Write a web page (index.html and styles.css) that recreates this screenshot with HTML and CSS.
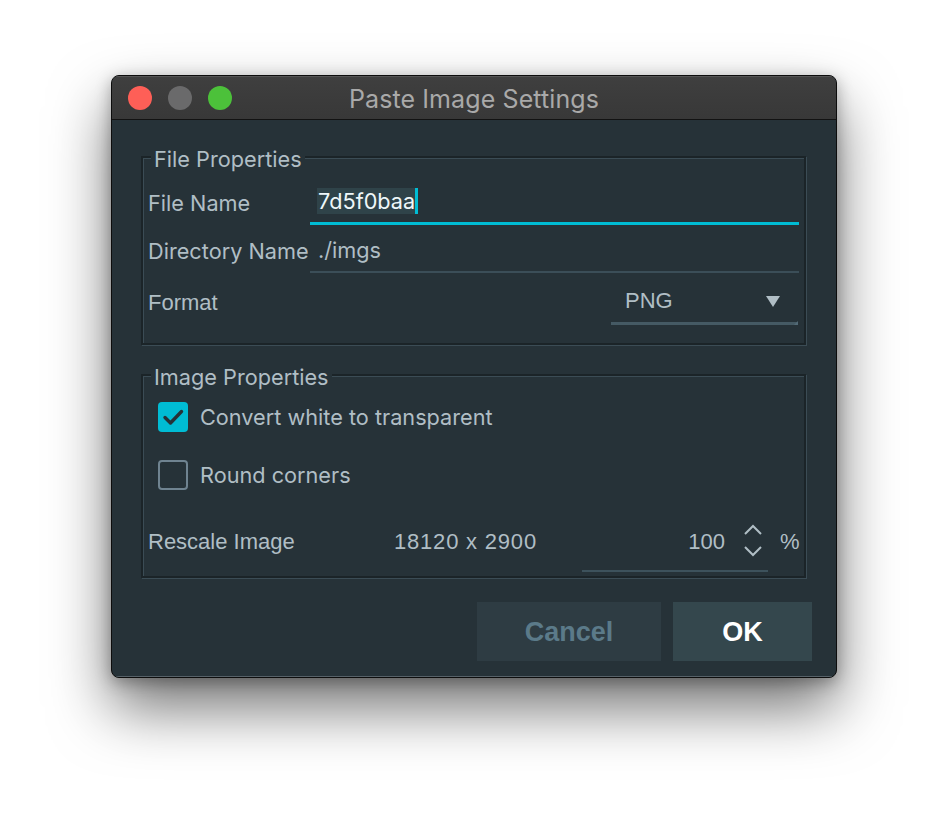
FILE: index.html
```html
<!DOCTYPE html>
<html>
<head>
<meta charset="utf-8">
<link rel="stylesheet" href="styles.css">
</head>
<body>
<div class="window">
  <div class="titlebar">
    <div class="lights">
      <span class="light red"></span>
      <span class="light gray"></span>
      <span class="light green"></span>
    </div>
    <div class="title">Paste Image Settings</div>
    <div class="spacer"></div>
  </div>
  <div class="content">
    <fieldset class="group group-file">
      <legend>File Properties</legend>
      <div class="row row-name">
        <span class="label">File Name</span>
        <div class="field field-active"><span class="sel">7d5f0baa</span><span class="caret"></span></div>
      </div>
      <div class="row row-dir">
        <span class="label">Directory Name</span>
        <div class="field field-plain"><span class="value">./imgs</span></div>
      </div>
      <div class="row row-format">
        <span class="label alt">Format</span>
        <div class="select">
          <span class="alt select-value">PNG</span>
          <svg class="select-arrow" width="14" height="11" viewBox="0 0 14 11"><path d="M0 0H14L7 11Z" fill="#b0bec5"/></svg>
          <span class="notch"></span>
        </div>
      </div>
    </fieldset>

    <fieldset class="group group-image">
      <legend>Image Properties</legend>
      <div class="row row-check">
        <span class="check checked">
          <svg width="30" height="30" viewBox="0 0 30 30"><path d="M7 15.5L12.5 21L23.5 9.5" fill="none" stroke="#263238" stroke-width="3.4" stroke-linecap="round" stroke-linejoin="round"/></svg>
        </span>
        <span class="check-label">Convert white to transparent</span>
      </div>
      <div class="row row-check row-check2">
        <span class="check"></span>
        <span class="check-label">Round corners</span>
      </div>
      <div class="row row-rescale">
        <span class="alt rescale-label">Rescale Image</span>
        <span class="alt dims">18120 x 2900</span>
        <div class="spin-field">
          <span class="alt spin-value">100</span>
          <svg class="spinner" width="22" height="36" viewBox="0 0 22 36"><path d="M3 11L11 3L19 11M3 24L11 32L19 24" fill="none" stroke="#b0bec5" stroke-width="2"/></svg>
        </div>
        <span class="alt percent">%</span>
      </div>
    </fieldset>

    <div class="buttons">
      <button class="btn btn-cancel">Cancel</button>
      <button class="btn btn-ok">OK</button>
    </div>
  </div>
</div>
</body>
</html>
```

FILE: styles.css
```css
html, body {
  margin: 0;
  padding: 0;
  background: #ffffff;
  height: 100%;
}

body {
  padding-top: 75px;
  box-sizing: border-box;
  font-family: "Inter", "Noto Sans", sans-serif;
}

.window {
  width: 724px;
  margin: 0 auto;
  border: 1px solid #0d0d0d;
  border-radius: 8px;
  overflow: hidden;
  background: #263238;
  box-shadow: 0 30px 60px rgba(0, 0, 0, 0.55), 0 4px 16px rgba(0, 0, 0, 0.3);
}

.titlebar {
  height: 43px;
  display: grid;
  grid-template-columns: 1fr auto 1fr;
  align-items: center;
  background: linear-gradient(#3f3f3f, #383838);
  border-bottom: 1px solid #121212;
  box-shadow: inset 0 1px 0 #555;
}

.lights {
  display: flex;
  gap: 16px;
  padding-left: 16px;
}

.light {
  width: 24px;
  height: 24px;
  border-radius: 50%;
}
.red { background: #fe5f57; }
.gray { background: #6a6a6b; }
.green { background: #4cc13a; }

.title {
  color: #a9a9a9;
  font-size: 25px;
  letter-spacing: 0.1px;
  padding-top: 2px;
}

.content {
  padding: 0 24px 16px 29px;
  box-shadow: inset 0 -1px 0 #566168;
}

.group {
  margin: 0 6px 0 0;
  border: 2px solid #1b2428;
  box-shadow: inset 1px 1px 0 #3b4c55, 1px 1px 0 #3b4c55;
  padding: 11px 5px 18px 5px;
  min-width: 0;
}

.group legend {
  margin-left: 3px;
  padding: 0 3px;
  font-size: 21.7px;
  line-height: 24px;
  color: #b0bec5;
  background: #263238;
  position: relative;
  top: 2px;
}

.group-file {
  margin-top: 25px;
}

.group-image {
  margin-top: 18px;
  padding-top: 8px;
  padding-bottom: 4px;
}

.row {
  display: flex;
  align-items: center;
}

.label {
  width: 162px;
  flex: none;
  font-size: 21.7px;
  color: #b0bec5;
}

.alt {
  font-family: "Liberation Sans", Arial, sans-serif;
  font-size: 22px;
  color: #b0bec5;
}

.row-name { height: 45px; }
.row-dir { height: 45px; margin-top: 3px; }
.row-format { height: 45px; margin-top: 7px; }

.field {
  flex: 1;
  height: 100%;
  box-sizing: border-box;
  display: flex;
  align-items: center;
  padding-left: 7px;
  font-size: 21.7px;
}

.field-active {
  border-bottom: 3px solid #00bcd4;
}

.field-plain {
  border-bottom: 2px solid #3b4e58;
  padding-left: 8px;
}

.value {
  color: #b0bec5;
}

.sel {
  display: inline-block;
  height: 26px;
  line-height: 26px;
  background: #2f4349;
  color: #eef7f9;
  padding-left: 1px;
}

.caret {
  display: inline-block;
  width: 3px;
  height: 26px;
  background: #00bcd4;
}

.select {
  margin-left: auto;
  width: 187px;
  margin-right: 1px;
  height: 100%;
  box-sizing: border-box;
  display: flex;
  align-items: center;
  padding: 0 18px 0 14px;
  border-bottom: 3px solid #455a64;
  position: relative;
}

.select-value {
  flex: 1;
}

.notch {
  position: absolute;
  right: 0;
  bottom: -3px;
  width: 0;
  height: 0;
  border-left: 4px solid transparent;
  border-bottom: 4px solid #526a76;
}

.row-check {
  height: 44px;
}
.row-check2 {
  margin-top: 14px;
}

.check {
  width: 30px;
  height: 30px;
  box-sizing: border-box;
  margin-left: 10px;
  border: 2px solid #6f8390;
  border-radius: 4px;
  flex: none;
}

.check.checked {
  border: none;
  background: #00bcd4;
}
.check svg { display: block; }

.check-label {
  margin-left: 12px;
  font-size: 21.7px;
  color: #b0bec5;
}

.row-rescale {
  margin-top: 21px;
  height: 54px;
  align-items: flex-start;
}

.rescale-label {
  width: 246px;
  flex: none;
  line-height: 48px;
}

.dims {
  width: 188px;
  flex: none;
  line-height: 48px;
  letter-spacing: 0.8px;
}

.spin-field {
  width: 186px;
  flex: none;
  height: 54px;
  box-sizing: border-box;
  border-bottom: 2px solid #3d525c;
  display: flex;
  align-items: flex-start;
  justify-content: flex-end;
  padding-right: 4px;
}

.spin-value {
  line-height: 48px;
}

.spinner {
  margin-left: 17px;
  margin-top: 5px;
}

.percent {
  margin-left: 12px;
  line-height: 48px;
}

.buttons {
  display: flex;
  justify-content: flex-end;
  gap: 12px;
  margin-top: 24px;
}

.btn {
  height: 59px;
  border: none;
  padding: 2px 0 0 0;
  font-family: "Liberation Sans", Arial, sans-serif;
  font-weight: bold;
  font-size: 27px;
}

.btn-cancel {
  width: 184px;
  background: #2e3c43;
  color: #5b7a89;
}

.btn-ok {
  width: 139px;
  background: #34474d;
  color: #ffffff;
}
```
